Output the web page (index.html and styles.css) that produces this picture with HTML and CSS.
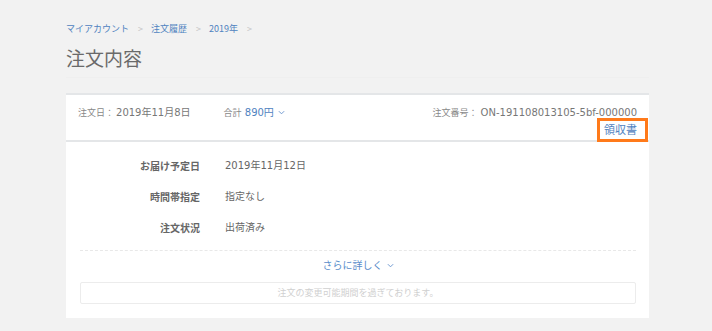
FILE: index.html
```html
<!DOCTYPE html>
<html lang="ja">
<head>
<meta charset="utf-8">
<link rel="stylesheet" href="styles.css">
</head>
<body>
<div class="page">
  <nav class="crumbs">
    <a>マイアカウント</a><span class="sep">&gt;</span>
    <a>注文履歴</a><span class="sep">&gt;</span>
    <a>2019年</a><span class="sep">&gt;</span>
  </nav>
  <h1 class="title">注文内容</h1>
  <section class="card">
    <header class="card-head">
      <div class="head-left">
        <span class="date"><span class="lbl">注文日：</span>2019年11月8日</span>
        <span class="total"><span class="lbl">合計</span> <a class="price">890円 <svg class="chev" viewBox="0 0 8 5" width="7" height="5"><path d="M1 1l3 3 3-3" fill="none" stroke="#6c97cf" stroke-width="1.1"/></svg></a></span>
      </div>
      <div class="head-right">
        <div class="order-no"><span class="lbl">注文番号：</span>ON-191108013105-5bf-000000</div>
        <a class="receipt">領収書</a>
        <span class="highlight"></span>
      </div>
    </header>
    <div class="card-body">
      <dl class="rows">
        <dt>お届け予定日</dt><dd>2019年11月12日</dd>
        <dt>時間帯指定</dt><dd>指定なし</dd>
        <dt>注文状況</dt><dd>出荷済み</dd>
      </dl>
      <div class="more"><a>さらに詳しく <svg class="chev" viewBox="0 0 8 5" width="7" height="5"><path d="M1 1l3 3 3-3" fill="none" stroke="#6c97cf" stroke-width="1.1"/></svg></a></div>
      <div class="notice">注文の変更可能期間を過ぎております。</div>
    </div>
  </section>
</div>
</body>
</html>
```

FILE: styles.css
```css
html, body {
  margin: 0;
  padding: 0;
  background: #f2f2f2;
}
body {
  font-family: "DejaVu Sans", "Noto Sans CJK JP", sans-serif;
  color: #666;
}
.page {
  margin-left: 66px;
  width: 583px;
  padding-top: 21px;
}
.crumbs {
  font-family: "Noto Sans CJK JP", sans-serif;
  font-size: 9px;
  line-height: 16px;
  display: flex;
  align-items: center;
}
.crumbs a {
  color: #4f82c0;
}
.crumbs .sep {
  color: #c4c4c4;
  margin: 0 8px 0 9px;
}
.title {
  margin: 0;
  padding: 8px 0 6px;
  font-family: "Noto Sans CJK JP", sans-serif;
  font-size: 19px;
  line-height: 26px;
  font-weight: 400;
  color: #6a6a6a;
  border-bottom: 1px solid #efefef;
}
.card {
  margin-top: 15px;
  background: #fff;
  border-top: 2px solid #e4e6e8;
}
.card-head {
  display: flex;
  justify-content: space-between;
  padding: 10px 12px 0 12px;
  height: 35px;
  border-bottom: 2px solid #e4e6e8;
  font-size: 10px;
  line-height: 16px;
  color: #777;
}
.head-left {
  display: flex;
  gap: 33px;
}
.lbl {
  font-size: 9px;
  color: #888;
}
.date .lbl {
  margin-right: 2px;
}
.price {
  color: #4f82c0;
}
.chev {
  vertical-align: 1px;
  margin-left: 1px;
}
.head-right {
  position: relative;
  display: flex;
  flex-direction: column;
  align-items: flex-end;
}
.order-no .lbl {
  margin-right: 3px;
}
.receipt {
  font-family: "Noto Sans CJK JP", sans-serif;
  color: #4f82c0;
  font-size: 11px;
  line-height: 14px;
  margin-top: 1px;
}
.highlight {
  position: absolute;
  right: -11px;
  top: 13px;
  width: 45px;
  height: 18px;
  border: 3px solid #ff7a1a;
}
.card-body {
  padding: 16px 13px 14px 14px;
}
.rows {
  margin: 0;
  display: grid;
  grid-template-columns: 120px 1fr;
  column-gap: 25px;
  row-gap: 15px;
  font-size: 10px;
  line-height: 16px;
  padding-bottom: 14px;
  border-bottom: 1px dashed #e8e8e8;
}
.rows dt {
  text-align: right;
  font-family: "Noto Sans CJK JP", sans-serif;
  font-weight: 700;
  color: #666;
}
.rows dd {
  margin: 0;
  color: #666;
}
.more {
  text-align: center;
  font-size: 10px;
  line-height: 16px;
  padding: 7px 0 8px;
}
.more a {
  color: #5a8cca;
}
.notice {
  border: 1px solid #ececec;
  border-radius: 2px;
  text-align: center;
  font-size: 9px;
  line-height: 20px;
  color: #d0d0d0;
}
```
